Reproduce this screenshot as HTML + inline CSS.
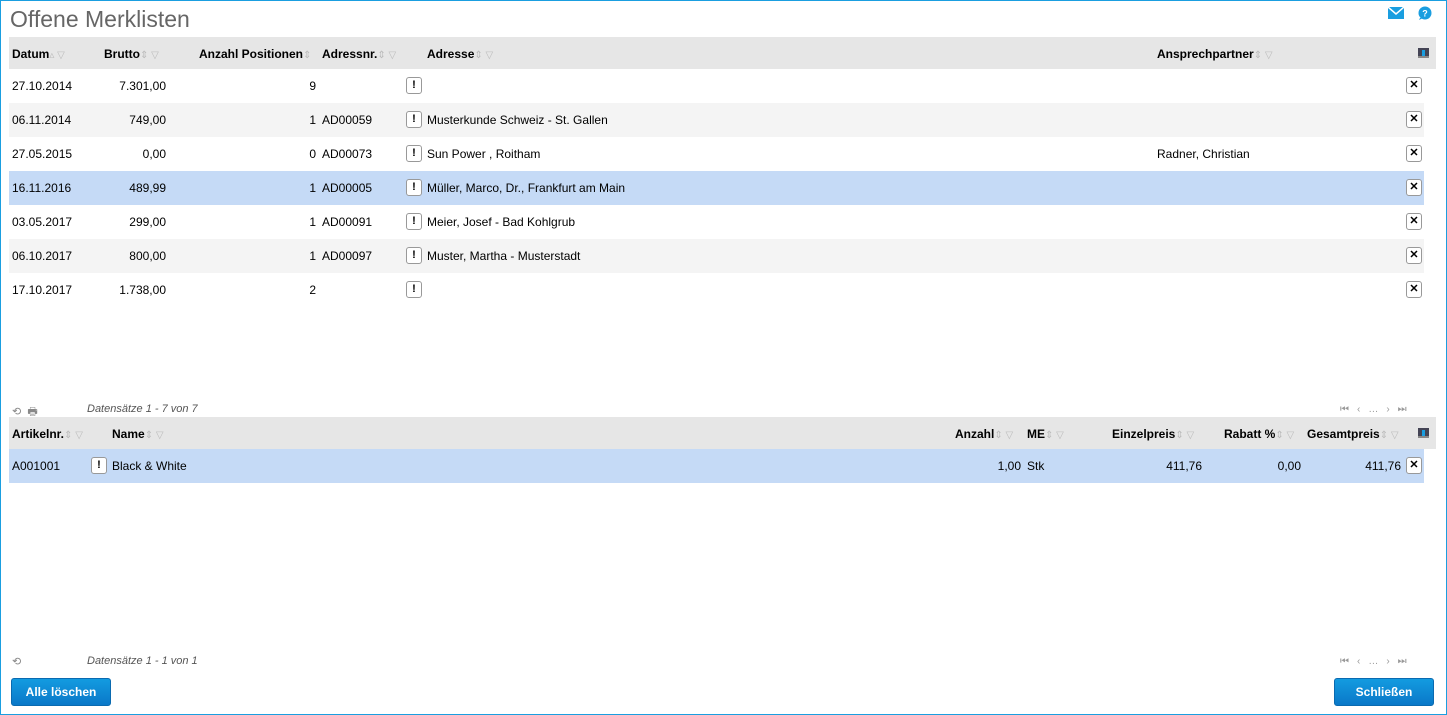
<!DOCTYPE html>
<html><head><meta charset="utf-8"><style>
*{margin:0;padding:0;box-sizing:border-box}
body{width:1447px;height:715px;position:relative;overflow:hidden;background:#fff;font-family:"Liberation Sans",Arial,sans-serif;font-size:12px;color:#000}
.frame{position:absolute;left:0;top:0;width:1447px;height:715px;border:1px solid #1a9ee0}
.a{position:absolute;white-space:nowrap}
h1{position:absolute;left:10px;top:6px;font-weight:normal;font-size:23px;color:#666}
.hdr{position:absolute;left:9px;width:1427px;height:32px;background:#e6e6e6}
.row{position:absolute;left:9px;width:1415px;height:34px}
.th{position:absolute;font-weight:bold;top:10px}
.ic{color:#bbb;font-weight:normal;font-size:10px}
.ex{position:absolute;width:16px;height:17px;border:1px solid #999;border-radius:3px;background:#fff;font-weight:bold;font-size:11px;text-align:center;line-height:15px}
.r{text-align:right}
.btn{position:absolute;top:678px;height:28px;background:linear-gradient(#139be0,#0a78c8);border:1px solid #0a6ab0;border-radius:3px;color:#fff;font-weight:bold;text-align:center;line-height:26px}
.foot{position:absolute;font-style:italic;color:#555;font-size:11px}
.pg{position:absolute;color:#999;font-size:10px;letter-spacing:8px}
.hi{position:absolute;left:1409px;top:11px;width:11px;height:10px;background:#445;border-bottom:2px solid #888}
.hi:after{content:"";position:absolute;left:4px;top:2px;width:3px;height:6px;background:#1a9ee0}
</style></head><body>
<div class="frame"></div>
<h1>Offene Merklisten</h1>
<svg class="a" style="left:1388px;top:7px" width="16" height="12"><rect width="16" height="12" fill="#1a9ee0"/><path d="M0 0 L8 7 L16 0" stroke="#fff" stroke-width="1.5" fill="none"/></svg>
<svg class="a" style="left:1417px;top:6px" width="16" height="14"><circle cx="8" cy="7" r="6.5" fill="#1a9ee0"/><path d="M3 12 L2 14 L6 12z" fill="#1a9ee0"/><text x="8" y="10.5" font-size="9" font-weight="bold" fill="#fff" text-anchor="middle" font-family="Liberation Sans">?</text></svg>

<div class="hdr" style="top:37px">
<span class="th" style="left:3px">Datum<span class="ic">▵ ▽</span></span>
<span class="th" style="left:95px">Brutto<span class="ic">⇕ ▽</span></span>
<span class="th" style="left:190px">Anzahl Positionen<span class="ic">⇕</span></span>
<span class="th" style="left:313px">Adressnr.<span class="ic">⇕ ▽</span></span>
<span class="th" style="left:418px">Adresse<span class="ic">⇕ ▽</span></span>
<span class="th" style="left:1148px">Ansprechpartner<span class="ic">⇕ ▽</span></span>
<span class="hi"></span>
</div>

<div class="row" style="top:69px;background:#fff"></div>
<div class="row" style="top:103px;background:#f4f4f4"></div>
<div class="row" style="top:137px;background:#fff"></div>
<div class="row" style="top:171px;background:#c5daf6"></div>
<div class="row" style="top:205px;background:#fff"></div>
<div class="row" style="top:239px;background:#f4f4f4"></div>
<div class="row" style="top:273px;background:#fff"></div>

<div class="a" style="left:12px;top:79px">27.10.2014</div><div class="a r" style="left:100px;width:66px;top:79px">7.301,00</div><div class="a r" style="left:280px;width:36px;top:79px">9</div><div class="ex" style="left:406px;top:77px">!</div><div class="ex" style="left:1406px;top:77px">✕</div>
<div class="a" style="left:12px;top:113px">06.11.2014</div><div class="a r" style="left:100px;width:66px;top:113px">749,00</div><div class="a r" style="left:280px;width:36px;top:113px">1</div><div class="a" style="left:322px;top:113px">AD00059</div><div class="ex" style="left:406px;top:111px">!</div><div class="a" style="left:427px;top:113px">Musterkunde Schweiz - St. Gallen</div><div class="ex" style="left:1406px;top:111px">✕</div>
<div class="a" style="left:12px;top:147px">27.05.2015</div><div class="a r" style="left:100px;width:66px;top:147px">0,00</div><div class="a r" style="left:280px;width:36px;top:147px">0</div><div class="a" style="left:322px;top:147px">AD00073</div><div class="ex" style="left:406px;top:145px">!</div><div class="a" style="left:427px;top:147px">Sun Power , Roitham</div><div class="a" style="left:1157px;top:147px">Radner, Christian</div><div class="ex" style="left:1406px;top:145px">✕</div>
<div class="a" style="left:12px;top:181px">16.11.2016</div><div class="a r" style="left:100px;width:66px;top:181px">489,99</div><div class="a r" style="left:280px;width:36px;top:181px">1</div><div class="a" style="left:322px;top:181px">AD00005</div><div class="ex" style="left:406px;top:179px">!</div><div class="a" style="left:427px;top:181px">Müller, Marco, Dr., Frankfurt am Main</div><div class="ex" style="left:1406px;top:179px">✕</div>
<div class="a" style="left:12px;top:215px">03.05.2017</div><div class="a r" style="left:100px;width:66px;top:215px">299,00</div><div class="a r" style="left:280px;width:36px;top:215px">1</div><div class="a" style="left:322px;top:215px">AD00091</div><div class="ex" style="left:406px;top:213px">!</div><div class="a" style="left:427px;top:215px">Meier, Josef - Bad Kohlgrub</div><div class="ex" style="left:1406px;top:213px">✕</div>
<div class="a" style="left:12px;top:249px">06.10.2017</div><div class="a r" style="left:100px;width:66px;top:249px">800,00</div><div class="a r" style="left:280px;width:36px;top:249px">1</div><div class="a" style="left:322px;top:249px">AD00097</div><div class="ex" style="left:406px;top:247px">!</div><div class="a" style="left:427px;top:249px">Muster, Martha - Musterstadt</div><div class="ex" style="left:1406px;top:247px">✕</div>
<div class="a" style="left:12px;top:283px">17.10.2017</div><div class="a r" style="left:100px;width:66px;top:283px">1.738,00</div><div class="a r" style="left:280px;width:36px;top:283px">2</div><div class="ex" style="left:406px;top:281px">!</div><div class="ex" style="left:1406px;top:281px">✕</div>

<div class="a" style="left:12px;top:403px;color:#888;font-size:11px">⟲ &nbsp;🖶</div>
<div class="foot" style="left:87px;top:403px">Datensätze 1 - 7 von 7</div>
<div class="pg" style="left:1340px;top:404px">⏮‹…›⏭</div>

<div class="hdr" style="top:417px">
<span class="th" style="left:3px">Artikelnr.<span class="ic">⇕ ▽</span></span>
<span class="th" style="left:103px">Name<span class="ic">⇕ ▽</span></span>
<span class="th" style="left:946px">Anzahl<span class="ic">⇕ ▽</span></span>
<span class="th" style="left:1018px">ME<span class="ic">⇕ ▽</span></span>
<span class="th" style="left:1103px">Einzelpreis<span class="ic">⇕ ▽</span></span>
<span class="th" style="left:1215px">Rabatt %<span class="ic">⇕ ▽</span></span>
<span class="th" style="left:1298px">Gesamtpreis<span class="ic">⇕ ▽</span></span>
<span class="hi"></span>
</div>
<div class="row" style="top:449px;background:#c5daf6"></div>
<div class="a" style="left:12px;top:459px">A001001</div><div class="ex" style="left:91px;top:457px">!</div><div class="a" style="left:112px;top:459px">Black &amp; White</div>
<div class="a r" style="left:960px;width:61px;top:459px">1,00</div><div class="a" style="left:1027px;top:459px">Stk</div>
<div class="a r" style="left:1120px;width:82px;top:459px">411,76</div><div class="a r" style="left:1230px;width:71px;top:459px">0,00</div><div class="a r" style="left:1320px;width:81px;top:459px">411,76</div><div class="ex" style="left:1406px;top:457px">✕</div>

<div class="a" style="left:12px;top:655px;color:#888;font-size:11px">⟲</div>
<div class="foot" style="left:87px;top:655px">Datensätze 1 - 1 von 1</div>
<div class="pg" style="left:1340px;top:656px">⏮‹…›⏭</div>

<div class="btn" style="left:11px;width:100px">Alle löschen</div>
<div class="btn" style="left:1334px;width:100px">Schließen</div>
</body></html>
